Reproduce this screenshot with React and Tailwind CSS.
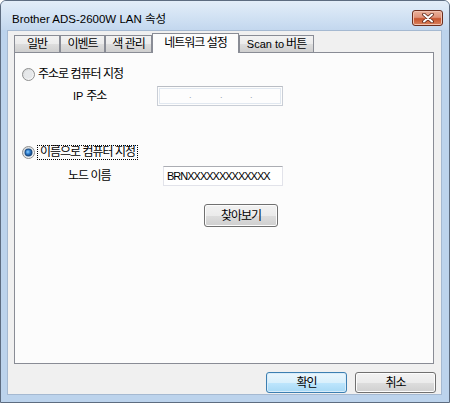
import React from "react";

const ui = "font-['Liberation_Sans','Noto_Sans_CJK_KR',sans-serif]";
const ko = "text-[12px] tracking-[-1px]";

function Radio({ checked }) {
  const id = checked ? "on" : "off";
  return (
    <svg width="13" height="13" viewBox="0 0 13 13" className="shrink-0">
      <defs>
        <linearGradient id={`ring-${id}`} x1="0" y1="0" x2="1" y2="1">
          <stop offset="0" stopColor="#d2d4d6" />
          <stop offset="1" stopColor="#ffffff" />
        </linearGradient>
        <radialGradient id={`dot-${id}`} cx="0.4" cy="0.4" r="0.7">
          <stop offset="0" stopColor="#8ed0ff" />
          <stop offset="0.5" stopColor="#2f7fd0" />
          <stop offset="1" stopColor="#143f74" />
        </radialGradient>
      </defs>
      <circle cx="6.5" cy="6.5" r="6" fill={`url(#ring-${id})`} stroke="#8e8f8f" />
      <circle cx="6.5" cy="6.5" r="4" fill={checked ? "#1e4f86" : "#e6e8ea"} />
      {checked && <circle cx="6.5" cy="6.5" r="3" fill={`url(#dot-${id})`} />}
    </svg>
  );
}

function Tab({ children, width, active }) {
  if (active) {
    return (
      <div
        className="relative z-10 -mb-px flex h-[20px] items-center justify-center border border-b-0 border-[#898c95] bg-[#fcfcfc] pb-[2px]"
        style={{ width }}
      >
        {children}
      </div>
    );
  }
  return (
    <div
      className="flex h-[17px] items-center justify-center border border-b-0 border-[#898c95] bg-[linear-gradient(to_bottom,#f2f2f2_0%,#ebebeb_50%,#dddddd_51%,#cfcfcf_100%)]"
      style={{ width }}
    >
      {children}
    </div>
  );
}

function Button({ children, primary, className = "" }) {
  return (
    <div
      className={
        "flex items-center justify-center rounded-[3px] border " +
        (primary
          ? "border-[#3c7fb1] bg-[linear-gradient(to_bottom,#eaf6fd_0%,#d9f0fc_50%,#bee6fd_51%,#a7d9f5_100%)] shadow-[inset_0_0_0_1px_#d8ecfa]"
          : "border-[#707070] bg-[linear-gradient(to_bottom,#f2f2f2_0%,#ebebeb_50%,#dddddd_51%,#cfcfcf_100%)] shadow-[inset_0_0_0_1px_#fcfcfc]") +
        " " +
        className
      }
    >
      {children}
    </div>
  );
}

export default function App() {
  return (
    <div className={`${ui} text-[11px] text-black`}>
      <div className="flex h-[403px] w-[450px] flex-col rounded-t-[6px] border border-[#5d6c80] bg-[#bcd3ec]">
        {/* title bar */}
        <div className="flex h-[29px] shrink-0 items-start justify-between rounded-t-[5px] bg-[linear-gradient(to_bottom,#e3edf8_0%,#d3e3f4_50%,#c3d7ee_100%)] pl-[11px] pr-[6px]">
          <span className="mt-[11px] text-[11.5px] leading-[14px]">Brother ADS-2600W LAN 속성</span>
          <div className="mt-[9px] flex h-[16px] w-[31px] items-center justify-center rounded-[3px] border border-[#6b2e1e] bg-[linear-gradient(to_bottom,#eab29b_0%,#df937a_45%,#c7552f_55%,#d9825d_100%)] shadow-[inset_0_0_0_1px_#f1c2b0]">
            <svg width="12" height="10" viewBox="0 0 12 10">
              <path d="M2 1.5 L10 8.5 M10 1.5 L2 8.5" stroke="#5a2416" strokeWidth="3.6" strokeLinecap="round" />
              <path d="M2 1.5 L10 8.5 M10 1.5 L2 8.5" stroke="#ffffff" strokeWidth="2" strokeLinecap="round" />
            </svg>
          </div>
        </div>

        {/* client area */}
        <div className="ml-[6px] flex h-[365px] w-[435px] flex-col border border-[#a5b9d1] bg-[#f0f0f0]">
          <div className="ml-[6px] mt-[2px] flex h-[19px] items-end">
            <Tab width={46}><span className={ko}>일반</span></Tab>
            <Tab width={45}><span className={ko}>이벤트</span></Tab>
            <Tab width={47}><span className={ko}>색 관리</span></Tab>
            <Tab width={87} active><span className={ko}>네트워크 설정</span></Tab>
            <Tab width={75}>
              Scan to <span className={`ml-[2px] ${ko}`}>버튼</span>
            </Tab>
          </div>

          <div className="ml-[6px] flex h-[312px] w-[420px] flex-col border border-[#898c95] bg-[#fcfcfc]">
            {/* address option */}
            <div className="ml-[7px] mt-[14px] flex h-[14px] items-center gap-[3px]">
              <Radio />
              <span className={`${ko} leading-[14px]`}>주소로 컴퓨터 지정</span>
            </div>
            <div className="ml-[58px] mt-[5px] flex h-[20px] items-center">
              <span className="w-[84px]">
                IP <span className={ko}>주소</span>
              </span>
              <div className="h-[20px] w-[126px] border border-[#c9ced6] border-t-[#b9bdc4] bg-[#fdfdfd] p-px">
                <div className="flex h-full items-center border border-[#e1e8f0] text-[9px] text-[#9aa3ae]">
                  <span className="w-[29px]" />
                  <span className="w-[31px]">.</span>
                  <span className="w-[30px]">.</span>
                  <span>.</span>
                </div>
              </div>
            </div>

            {/* name option */}
            <div className="ml-[7px] mt-[39px] flex h-[15px] items-center gap-[2px]">
              <Radio checked />
              <span className={`border border-dotted border-black px-[2px] leading-[13px] ${ko}`}>
                이름으로 컴퓨터 지정
              </span>
            </div>
            <div className="ml-[53px] mt-[6px] flex h-[20px] items-center">
              <span className={`w-[95px] ${ko}`}>노드 이름</span>
              <div className="flex h-[20px] w-[120px] items-center border border-[#e2e3ea] border-t-[#abadb3] bg-white pl-[3px] tracking-[-1px]">
                BRNXXXXXXXXXXXXX
              </div>
            </div>
            <div className="ml-[189px] mt-[18px]">
              <Button className="h-[23px] w-[74px]"><span className={ko}>찾아보기</span></Button>
            </div>
          </div>

          <div className="mt-[8px] flex justify-end gap-[8px] pr-[5px]">
            <Button primary className="h-[21px] w-[81px]"><span className={ko}>확인</span></Button>
            <Button className="h-[21px] w-[81px]"><span className={ko}>취소</span></Button>
          </div>
        </div>
      </div>
    </div>
  );
}
